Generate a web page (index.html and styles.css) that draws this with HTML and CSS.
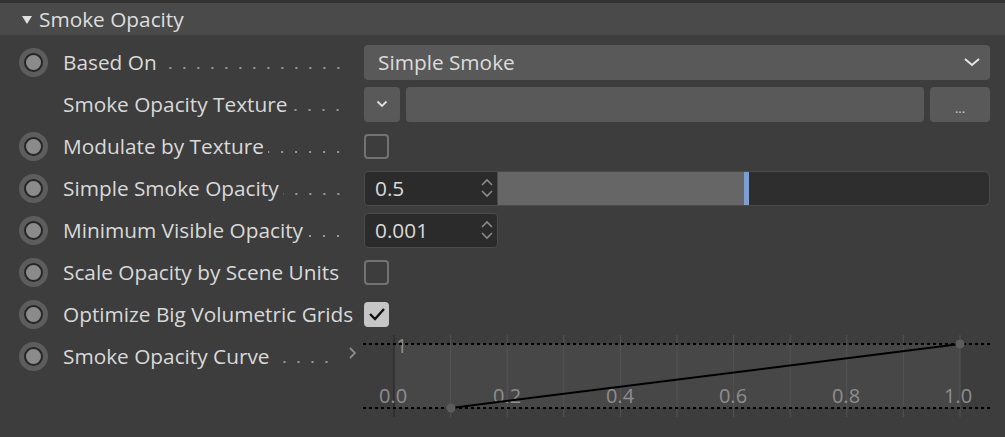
FILE: index.html
```html
<!DOCTYPE html>
<html lang="en">
<head>
    <meta charset="UTF-8">
    <title>Smoke Opacity</title>
    <link rel="stylesheet" href="styles.css">
</head>
<body>

<div class="top-strip"></div>
<div class="header">
    <span class="tri"></span>
    <span class="title">Smoke Opacity</span>
</div>

<div class="rows">
    <div class="row">
        <span class="radio"></span>
        <span class="label"><span class="txt">Based On</span><span class="dots"></span></span>
        <div class="ctl">
            <div class="select">
                <span>Simple Smoke</span>
                <svg width="18" height="12" viewBox="0 0 18 12"><path d="M2 3 L9 9 L16 3" fill="none" stroke="#e6e6e6" stroke-width="2"/></svg>
            </div>
        </div>
    </div>

    <div class="row">
        <span class="radio hidden"></span>
        <span class="label"><span class="txt">Smoke Opacity Texture</span><span class="dots"></span></span>
        <div class="ctl tex">
            <div class="btn small">
                <svg width="12" height="8" viewBox="0 0 12 8"><path d="M1.5 1.5 L6 6 L10.5 1.5" fill="none" stroke="#e0e0e0" stroke-width="1.8"/></svg>
            </div>
            <div class="field"></div>
            <div class="btn more">...</div>
        </div>
    </div>

    <div class="row">
        <span class="radio"></span>
        <span class="label"><span class="txt">Modulate by Texture</span><span class="dots"></span></span>
        <div class="ctl"><span class="check"></span></div>
    </div>

    <div class="row">
        <span class="radio"></span>
        <span class="label"><span class="txt">Simple Smoke Opacity</span><span class="dots"></span></span>
        <div class="ctl">
            <div class="num">
                <span>0.5</span>
                <svg class="spin" width="14" height="24" viewBox="0 0 14 24"><path d="M2 9 L7 4 L12 9 M2 15 L7 20 L12 15" fill="none" stroke="#8a8a8a" stroke-width="1.6"/></svg>
            </div>
            <div class="slider">
                <div class="fill" style="width: 50%"></div>
                <div class="mark"></div>
            </div>
        </div>
    </div>

    <div class="row">
        <span class="radio"></span>
        <span class="label"><span class="txt">Minimum Visible Opacity</span><span class="dots"></span></span>
        <div class="ctl">
            <div class="num alone">
                <span>0.001</span>
                <svg class="spin" width="14" height="24" viewBox="0 0 14 24"><path d="M2 9 L7 4 L12 9 M2 15 L7 20 L12 15" fill="none" stroke="#8a8a8a" stroke-width="1.6"/></svg>
            </div>
        </div>
    </div>

    <div class="row">
        <span class="radio"></span>
        <span class="label"><span class="txt">Scale Opacity by Scene Units</span></span>
        <div class="ctl"><span class="check"></span></div>
    </div>

    <div class="row">
        <span class="radio"></span>
        <span class="label"><span class="txt">Optimize Big Volumetric Grids</span></span>
        <div class="ctl">
            <span class="check on">
                <svg width="18" height="14" viewBox="0 0 18 14"><path d="M2 7 L7 12 L16 2" fill="none" stroke="#111" stroke-width="2.4"/></svg>
            </span>
        </div>
    </div>

    <div class="row curve-row">
        <div class="curve-head">
            <span class="radio"></span>
            <span class="label short"><span class="txt">Smoke Opacity Curve</span><span class="dots"></span></span>
            <span class="expand">
                <svg width="10" height="14" viewBox="0 0 10 14"><path d="M2 2 L7 7 L2 12" fill="none" stroke="#8a8a8a" stroke-width="1.8"/></svg>
            </span>
        </div>
        <svg class="graph" width="629" height="82" viewBox="0 0 629 82">
            <rect x="32" y="9" width="566" height="64" fill="#474747"/>
            <g stroke="#545454" stroke-width="1">
                <line x1="88.6" y1="0" x2="88.6" y2="82"/>
                <line x1="145.2" y1="0" x2="145.2" y2="82"/>
                <line x1="201.8" y1="0" x2="201.8" y2="82"/>
                <line x1="258.4" y1="0" x2="258.4" y2="82"/>
                <line x1="315" y1="0" x2="315" y2="82"/>
                <line x1="371.6" y1="0" x2="371.6" y2="82"/>
                <line x1="428.2" y1="0" x2="428.2" y2="82"/>
                <line x1="484.8" y1="0" x2="484.8" y2="82"/>
                <line x1="541.4" y1="0" x2="541.4" y2="82"/>
                <line x1="598" y1="0" x2="598" y2="82"/>
            </g>
            <line x1="32" y1="0" x2="32" y2="82" stroke="#2e2e2e" stroke-width="1.5"/>
            <g class="ticks" fill="#8e8e8e">
                <text x="34" y="18">1</text>
                <text x="31" y="68" text-anchor="middle">0.0</text>
                <text x="145" y="68" text-anchor="middle">0.2</text>
                <text x="258" y="68" text-anchor="middle">0.4</text>
                <text x="371" y="68" text-anchor="middle">0.6</text>
                <text x="484" y="68" text-anchor="middle">0.8</text>
                <text x="596" y="68" text-anchor="middle">1.0</text>
            </g>
            <g stroke="#000" stroke-width="2" stroke-dasharray="3 3">
                <line x1="1" y1="9" x2="629" y2="9"/>
                <line x1="1" y1="73" x2="629" y2="73"/>
            </g>
            <line x1="89" y1="73" x2="598" y2="9" stroke="#000" stroke-width="2"/>
            <circle cx="89" cy="73" r="4.5" fill="#5c5c5c"/>
            <circle cx="598" cy="9" r="4.5" fill="#5c5c5c"/>
        </svg>
    </div>
</div>

</body>
</html>
```

FILE: styles.css
```css
body {
    margin: 0;
    background: #3d3d3d;
    color: #d9d9d9;
    font-family: "Open Sans", "Noto Sans", sans-serif;
    font-size: 20.8px;
    width: 1005px;
    height: 437px;
    overflow: hidden;
}

.top-strip { height: 3px; background: #333; }

.header {
    height: 32px;
    background: #4a4a4a;
    display: flex;
    align-items: center;
    padding-left: 22px;
}
.tri {
    width: 0;
    height: 0;
    border-left: 5px solid transparent;
    border-right: 5px solid transparent;
    border-top: 8px solid #e0e0e0;
    margin-right: 7px;
    margin-top: 2px;
}
.title { color: #dedede; }

.rows { margin-top: 6px; }

.row {
    display: flex;
    align-items: center;
    height: 42px;
    padding-right: 15px;
}

.radio {
    flex: none;
    width: 29px;
    height: 29px;
    margin-left: 19px;
    margin-right: 15px;
    border-radius: 50%;
    background: #5d5d5d;
    position: relative;
}
.radio::after {
    content: "";
    position: absolute;
    left: 5px;
    top: 5px;
    width: 15px;
    height: 15px;
    border-radius: 50%;
    border: 2px solid #262626;
    background: #8b8b8b;
}
.radio.hidden { visibility: hidden; }

.label {
    flex: none;
    width: 282px;
    display: flex;
    align-items: baseline;
    white-space: nowrap;
}
.label.short { width: 270px; }
.txt { flex: none; }
.dots {
    flex: 1;
    height: 4px;
    margin-left: 4px;
    background-image: radial-gradient(circle, #9a9a9a 1px, transparent 1.4px);
    background-size: 14px 4px;
    background-position: right 0;
    background-repeat: repeat-x;
}

.ctl {
    flex: 1;
    margin-left: 19px;
    display: flex;
    align-items: center;
}

.select {
    flex: 1;
    height: 35px;
    background: #595959;
    border-radius: 4px;
    display: flex;
    align-items: center;
    justify-content: space-between;
    padding: 0 9px 0 14px;
    color: #dcdcdc;
}

.tex { gap: 6px; }
.btn, .field {
    height: 35px;
    background: #595959;
    border-radius: 4px;
    display: flex;
    align-items: center;
    justify-content: center;
}
.btn.small { width: 36px; }
.field { flex: 1; }
.btn.more {
    width: 60px;
    font-size: 13px;
    color: #d0d0d0;
    padding-top: 8px;
    box-sizing: border-box;
}

.check {
    width: 21px;
    height: 21px;
    border: 2px solid #727272;
    border-radius: 4px;
    display: flex;
    align-items: center;
    justify-content: center;
}
.check.on {
    background: #c6c6c6;
    border-color: #c6c6c6;
}

.num {
    width: 134px;
    height: 35px;
    box-sizing: border-box;
    background: #2b2b2b;
    border: 1px solid #4b4b4b;
    border-radius: 4px 0 0 4px;
    display: flex;
    align-items: center;
    justify-content: space-between;
    padding: 0 3px 0 10px;
    color: #dadada;
}
.num.alone { border-radius: 4px; }

.slider {
    flex: 1;
    height: 35px;
    box-sizing: border-box;
    background: #2e2e2e;
    border: 1px solid #4b4b4b;
    border-left: none;
    border-radius: 0 6px 6px 0;
    display: flex;
}
.fill { background: #666; }
.mark { width: 5px; background: #7d9fd3; }

.curve-row {
    align-items: flex-start;
    height: auto;
}
.curve-head {
    display: flex;
    align-items: center;
    height: 42px;
}
.expand {
    width: 29px;
    box-sizing: border-box;
    padding-left: 15px;
    display: flex;
    align-items: center;
    margin-top: -6px;
}
.graph {
    display: block;
    overflow: visible;
}
.ticks text {
    font-family: "Open Sans", "Noto Sans", sans-serif;
    font-size: 20px;
}
```
